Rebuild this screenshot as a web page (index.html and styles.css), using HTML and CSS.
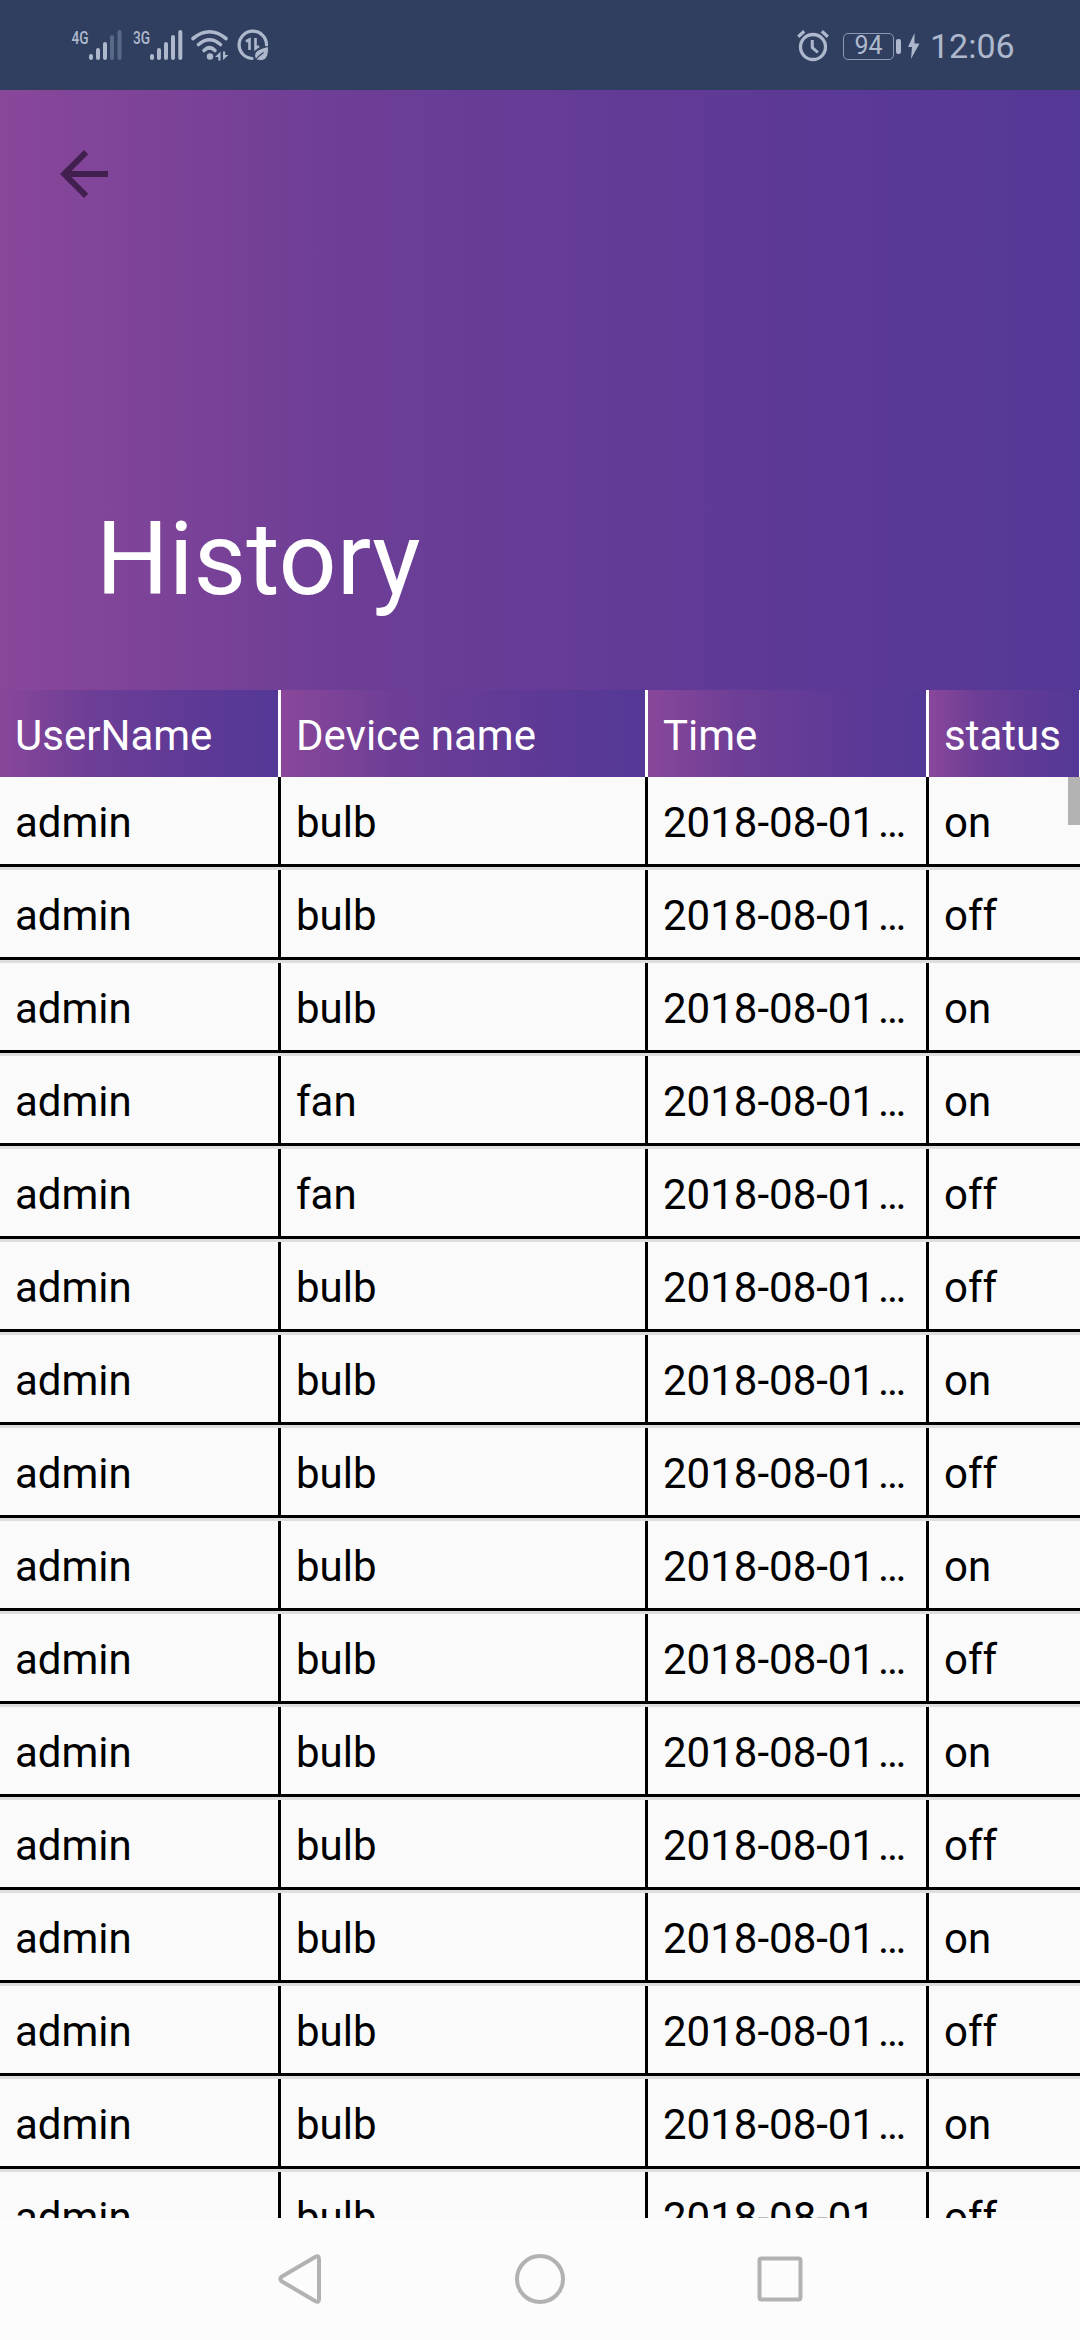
FILE: index.html
```html
<!DOCTYPE html>
<html lang="en">
<head>
<meta charset="utf-8">
<title>History</title>
<link rel="stylesheet" href="styles.css">
</head>
<body>
<div class="screen">
  <div class="status-bar">
    <svg class="status-icons" width="220" height="50" viewBox="0 0 220 50">
      <g fill="none" stroke="#aeb8cd" stroke-linecap="round">
        <g stroke-width="4">
          <path d="M31 36v2M38 30v8M45 24v14"/>
          <path d="M52 17v21M59.500 12v26" stroke="#586987"/>
          <path d="M92 36v2M99 30v8M106 24v14M113 17v21M120.300 12v26"/>
        </g>
        <path d="M133 18.500Q149.500 5 166 18.500M138.500 24.500Q149.500 15 160.500 24.500M144 30.500Q149.500 25 155 30.500" stroke-width="3.600"/>
        <path d="M206.500 25A13.700 13.700 0 1 0 192 38.500" stroke-width="3.200"/>
        <path d="M186 21.500l3.500-2v10.500M195.500 18v10.500l3.500-2.500" stroke-width="2.600" stroke-linecap="butt"/>
      </g>
      <g fill="#aeb8cd">
        <circle cx="150" cy="36.500" r="3.200"/>
        <path d="M155 37l5.500-5.500v9h-2.200V37zM163 31.500V40l5.500-5h-3.300v-3.500z"/>
        <path d="M196 39.500C192 33 197 29 208.500 26.500C209 36 206 42.500 197.500 40" stroke="#303f60" stroke-width="1"/>
      </g>
      <path d="M194.500 41.500Q198 36 203.500 32.500" fill="none" stroke="#303f60" stroke-width="1.200"/>
      <g class="network-label"><text transform="translate(11.500 23.500) scale(.74 1)">4G</text><text transform="translate(73 23.500) scale(.74 1)">3G</text></g>
    </svg>
    <div class="status-right">
      <svg width="32" height="34" viewBox="0 0 32 34" fill="none" stroke="#aeb8cd">
        <circle cx="16" cy="18" r="12.500" stroke-width="3.300"/>
        <path d="M15.300 11v7.500l5.500 5" stroke-width="3"/>
        <path d="M1.200 7.800l6-5.500M30.800 7.800l-6-5.500" stroke-width="3.200"/>
      </svg>
      <div class="battery">94</div>
      <div class="battery-tip"></div>
      <svg class="bolt" width="13" height="26" viewBox="0 0 13 26"><path d="M7.500 0L1 14h4l-1 12 8.500-15.500H7.500z" fill="#aeb8cd"/></svg>
      <span class="clock">12:06</span>
    </div>
  </div>
  <header class="hero">
    <svg class="back" width="48" height="48" viewBox="4 4 16 16"><path fill="#41204f" d="M20 11H7.830l5.590-5.590L12 4l-8 8 8 8 1.410-1.410L7.830 13H20v-2z"/></svg>
    <h1 class="title">History</h1>
  </header>
  <div class="row head"><div class="cell">UserName</div><div class="cell">Device name</div><div class="cell">Time</div><div class="cell">status</div></div>
  <main class="list" id="list">
    <div class="scroll-thumb"></div>
  </main>
  <nav class="nav">
    <svg width="44" height="52" viewBox="0 0 44 52"><path d="M37.500 3.800Q41 2 41 6v40Q41 50 37.500 48.200L4 28.500Q0.500 26 4 23.500Z"/></svg>
    <svg width="52" height="52" viewBox="0 0 52 52"><circle cx="26" cy="26" r="23"/></svg>
    <svg width="46" height="46" viewBox="0 0 46 46"><rect x="2.500" y="2.500" width="41" height="41" rx="2"/></svg>
  </nav>
</div>
<script src="rows.js"></script>
</body>
</html>
```
FILE: styles.css
```css
* { box-sizing: border-box; }
body { margin: 0; font-family: Roboto, sans-serif; background: #fafafa; }
.screen { width: 1080px; height: 2340px; display: flex; flex-direction: column; overflow: hidden; }
.status-bar { height: 90px; flex: none; background: #303f60; color: #aeb8cd; display: flex; justify-content: space-between; align-items: flex-start; padding: 20px 66px 0 60px; }
.network-label { font: 500 18.500px Roboto, sans-serif; fill: #aeb8cd; }
.status-right { display: flex; align-items: center; height: 52px; }
.battery { width: 51px; height: 27px; margin-left: 14px; border: 1.500px solid #8d98b1; border-radius: 5px; font-size: 25px; line-height: 24px; text-align: center; }
.battery-tip { width: 5px; height: 15px; margin-left: 2px; border-radius: 2px; background: #aeb8cd; }
.bolt { margin: 0 10px 0 6px; }
.clock { font-size: 34px; line-height: 50px; width: 84px; white-space: nowrap; }
.hero { height: 600px; flex: none; background: linear-gradient(90deg, #89479a 0%, #6d3e96 32%, #603a96 64%, #543896 100%); padding: 60px 60px 0 60px; display: flex; flex-direction: column; }
.back { flex: none; display: block; }
.title { margin: 301px 0 0 36px; color: #fff; font-size: 102px; line-height: 120px; font-weight: 400; }
.row { display: grid; grid-template-columns: 281px 367px 281px 151px; height: 93px; flex: none; border-bottom: 3px solid #dedede; position: relative; }
.cell { height: 90px; padding: 21px 12px 0 15px; border-right: 3px solid #000; border-bottom: 3px solid #000; color: #000; font-size: 42px; line-height: 49px; white-space: nowrap; overflow: hidden; }
.cell:last-child { border-right: 0; }
.ellipsis { margin-left: 3px; }
.head { height: 87px; border-bottom: 0; }
.head .cell { height: 87px; color: #fff; border-right-color: #fff; border-bottom: 0; background: linear-gradient(90deg, #89479a 0%, #6d3e96 32%, #603a96 64%, #543896 100%); }
.head .cell:last-child { border-right: 1px solid #fff; padding-right: 0; }
.list { flex: 1; min-height: 0; overflow: hidden; position: relative; background: #fafafa; }
.scroll-thumb { position: absolute; z-index: 1; top: 0; right: 0; width: 12px; height: 48px; background: #b3b3b3; }
.nav { height: 122px; flex: none; background: #fcfcfc; display: grid; grid-template-columns: 240px 240px 240px; justify-content: center; justify-items: center; align-items: center; }
.nav svg { fill: none; stroke: #b2b2b2; stroke-width: 4; }
```
FILE: rows.js
```js
const entries = [
  ["bulb", "on"], ["bulb", "off"], ["bulb", "on"], ["fan", "on"],
  ["fan", "off"], ["bulb", "off"], ["bulb", "on"], ["bulb", "off"],
  ["bulb", "on"], ["bulb", "off"], ["bulb", "on"], ["bulb", "off"],
  ["bulb", "on"], ["bulb", "off"], ["bulb", "on"], ["bulb", "off"]
];
const list = document.getElementById("list");
for (const [device, status] of entries) {
  const row = document.createElement("div");
  row.className = "row";
  for (const text of ["admin", device, "2018-08-01…", status]) {
    const cell = document.createElement("div");
    cell.className = "cell";
    if (text.endsWith("…")) {
      const dots = document.createElement("span");
      dots.className = "ellipsis";
      dots.textContent = "…";
      cell.append(text.slice(0, -1), dots);
    } else {
      cell.textContent = text;
    }
    row.append(cell);
  }
  list.append(row);
}
```
